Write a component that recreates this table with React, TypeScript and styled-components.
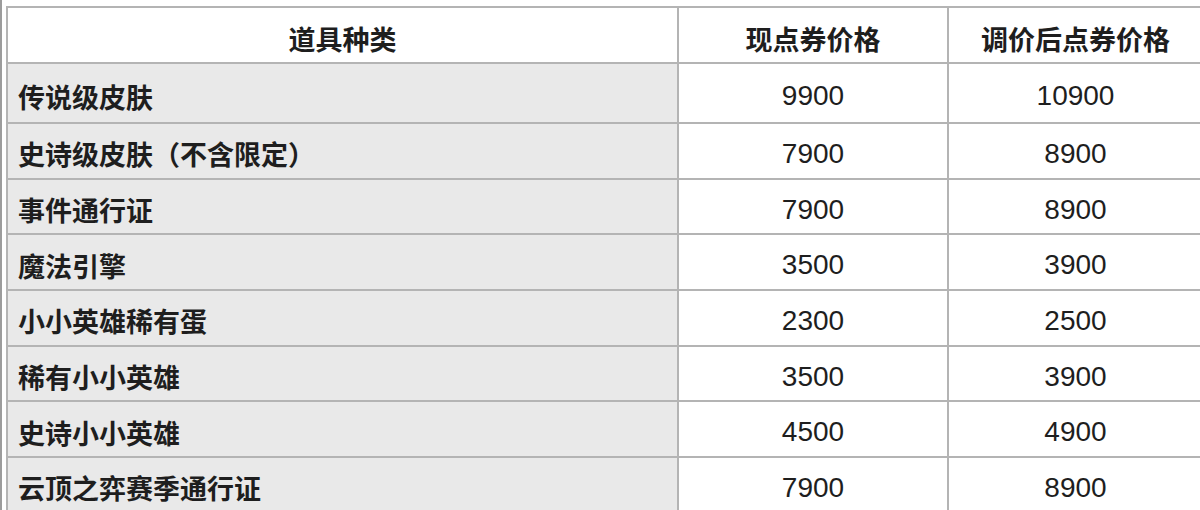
import { FC } from 'react';
import styled, { createGlobalStyle } from 'styled-components';

interface iRow {
  name: string;
  now: string;
  after: string;
}

const rows: iRow[] = [
  { name: '传说级皮肤', now: '9900', after: '10900' },
  { name: '史诗级皮肤（不含限定）', now: '7900', after: '8900' },
  { name: '事件通行证', now: '7900', after: '8900' },
  { name: '魔法引擎', now: '3500', after: '3900' },
  { name: '小小英雄稀有蛋', now: '2300', after: '2500' },
  { name: '稀有小小英雄', now: '3500', after: '3900' },
  { name: '史诗小小英雄', now: '4500', after: '4900' },
  { name: '云顶之弈赛季通行证', now: '7900', after: '8900' },
];

const GlobalStyle = createGlobalStyle`
  html, body {
    margin: 0;
    padding: 0;
    background: #fff;
    overflow: hidden;
  }
  body {
    font-family: "Noto Sans CJK SC", "Liberation Sans", sans-serif;
  }
`;

const Page = styled.div`
  height: 510px;
  border-left: 2px solid #9c9c9c;
  padding: 6px 0 0 4px;
  box-sizing: border-box;
  overflow: hidden;
`;

const Table = styled.table`
  width: 1196px;
  border-collapse: collapse;
  table-layout: fixed;
  color: #1e1e1e;
`;

const Head = styled.th<{ $w: number }>`
  width: ${(p) => p.$w}px;
  height: 56px;
  padding: 6px 0 0;
  border: 2px solid #b4b4b4;
  background: #fff;
  font-size: 27px;
  font-weight: 700;
  text-align: center;
  box-sizing: border-box;
`;

const Row = styled.tr<{ $first?: boolean }>`
  height: ${(p) => (p.$first ? '60px' : '55.7px')};
`;

const Cell = styled.td<{ $name?: boolean }>`
  padding: ${(p) => (p.$name ? '6px 0 0 10px' : '6px 0 0')};
  border: 2px solid #b4b4b4;
  background: ${(p) => (p.$name ? '#e9e9e9' : '#fff')};
  font-size: ${(p) => (p.$name ? '27px' : '28px')};
  font-weight: ${(p) => (p.$name ? 700 : 400)};
  text-align: ${(p) => (p.$name ? 'left' : 'center')};
  font-family: ${(p) =>
    p.$name
      ? '"Noto Sans CJK SC", sans-serif'
      : '"Liberation Sans", Arial, sans-serif'};
  box-sizing: border-box;
  white-space: nowrap;
`;

const App: FC = () => (
  <>
    <GlobalStyle />
    <Page>
      <Table>
        <thead>
          <tr>
            <Head $w={671}>道具种类</Head>
            <Head $w={270}>现点券价格</Head>
            <Head $w={255}>调价后点券价格</Head>
          </tr>
        </thead>
        <tbody>
          {rows.map((r, i) => (
            <Row key={r.name} $first={i === 0}>
              <Cell $name>{r.name}</Cell>
              <Cell>{r.now}</Cell>
              <Cell>{r.after}</Cell>
            </Row>
          ))}
        </tbody>
      </Table>
    </Page>
  </>
);

export default App;
